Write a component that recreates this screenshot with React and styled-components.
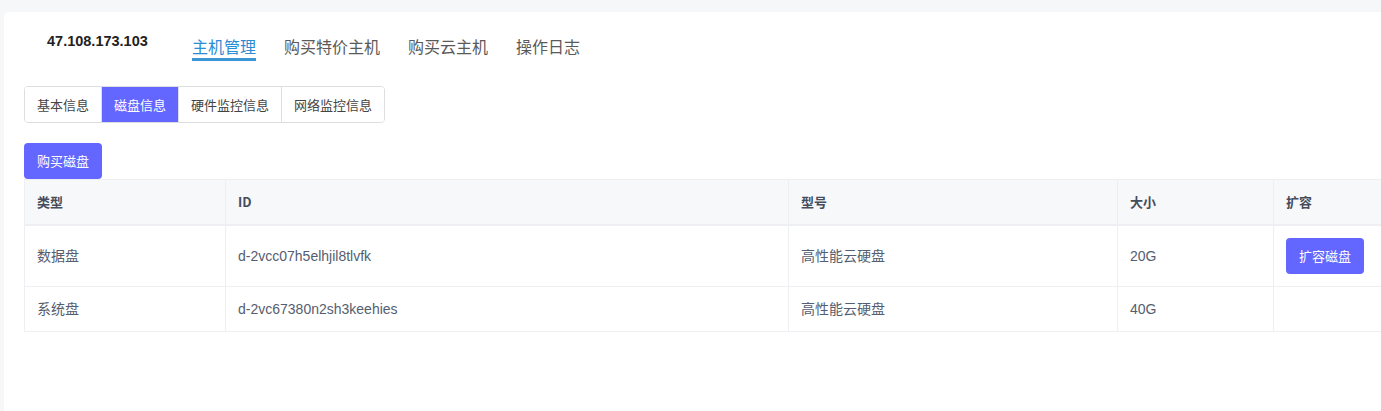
import React from "react";
import styled, { createGlobalStyle } from "styled-components";

const Global = createGlobalStyle`
  html, body { margin: 0; padding: 0; background: #f6f7f9; overflow: hidden; }
  body { font-family: "Liberation Sans", "Noto Sans CJK SC", sans-serif; }
  * { box-sizing: border-box; }
`;

const Page = styled.div`
  padding: 12px 0 0 4px;
  width: 1381px;
  height: 411px;
`;

const Card = styled.div`
  background: #fff;
  border-radius: 5px 0 0 0;
  width: 1420px;
  height: 400px;
  padding: 22px 0 0 20px;
`;

const Header = styled.div`
  display: flex;
  align-items: flex-start;
`;

const Ip = styled.div`
  font-family: "Liberation Sans", sans-serif;
  font-weight: bold;
  font-size: 14.5px;
  color: #222;
  padding: 0 0 0 23px;
  width: 168px;
  line-height: 14px;
`;

const Nav = styled.nav`
  display: flex;
  gap: 28px;
  padding-top: 2px;
`;

const NavItem = styled.div`
  font-family: "Noto Sans CJK SC", sans-serif;
  font-size: 16px;
  line-height: 20px;
  padding-bottom: 2px;
  color: ${(p) => (p.$active ? "#2c8cd4" : "#5a5a5a")};
  border-bottom: 3px solid ${(p) => (p.$active ? "#3c96d6" : "transparent")};
`;

const Tabs = styled.div`
  display: inline-flex;
  margin-top: 25px;
  border: 1px solid #dcdee2;
  border-radius: 4px;
  overflow: hidden;
`;

const Tab = styled.div`
  font-family: "Noto Sans CJK SC", sans-serif;
  font-size: 13px;
  line-height: 21px;
  padding: 7px 12px;
  color: ${(p) => (p.$active ? "#fff" : "#444")};
  background: ${(p) => (p.$active ? "#6366ff" : "#fff")};
  & + & { border-left: 1px solid #dcdee2; }
`;

const Button = styled.button`
  font-family: "Noto Sans CJK SC", sans-serif;
  font-size: 13px;
  line-height: 20px;
  height: 36px;
  padding: 0 13px;
  border: none;
  border-radius: 4px;
  background: #6366ff;
  color: #fff;
  cursor: pointer;
`;

const Toolbar = styled.div`
  margin-top: 20px;
  display: flex;
`;

const Table = styled.table`
  border-collapse: collapse;
  table-layout: fixed;
  width: 1396px;
  font-family: "Liberation Sans", "Noto Sans CJK SC", sans-serif;
  font-size: 14px;
  color: #555d70;
`;

const Th = styled.th`
  text-align: left;
  font-weight: bold;
  background: #f7f8fa;
  color: #454c5c;
  padding: 11px 12px;
  line-height: 20px;
  height: 45px;
  border: 1px solid #edeff3;
  border-bottom-width: 2px;
  font-family: "Noto Sans CJK SC", "Liberation Sans", sans-serif;
  font-size: 13px;
`;

const Td = styled.td`
  padding: 12px 12px;
  line-height: 20px;
  height: 44px;
  border: 1px solid #edeff3;
  border-top: none;
  vertical-align: middle;
`;

const columns = [
  { key: "type", title: "类型", width: 201 },
  { key: "id", title: "ID", width: 563 },
  { key: "model", title: "型号", width: 329 },
  { key: "size", title: "大小", width: 156 },
  { key: "expand", title: "扩容", width: 147 },
];

const rows = [
  { type: "数据盘", id: "d-2vcc07h5elhjil8tlvfk", model: "高性能云硬盘", size: "20G", expand: true },
  { type: "系统盘", id: "d-2vc67380n2sh3keehies", model: "高性能云硬盘", size: "40G", expand: false },
];

export default function App() {
  return (
    <>
      <Global />
      <Page>
        <Card>
          <Header>
            <Ip>47.108.173.103</Ip>
            <Nav>
              <NavItem $active>主机管理</NavItem>
              <NavItem>购买特价主机</NavItem>
              <NavItem>购买云主机</NavItem>
              <NavItem>操作日志</NavItem>
            </Nav>
          </Header>
          <Tabs>
            <Tab>基本信息</Tab>
            <Tab $active>磁盘信息</Tab>
            <Tab>硬件监控信息</Tab>
            <Tab>网络监控信息</Tab>
          </Tabs>
          <Toolbar>
            <Button>购买磁盘</Button>
          </Toolbar>
          <Table>
            <colgroup>
              {columns.map((c) => (
                <col key={c.key} style={{ width: c.width }} />
              ))}
            </colgroup>
            <thead>
              <tr>
                {columns.map((c) => (
                  <Th key={c.key}>{c.title}</Th>
                ))}
              </tr>
            </thead>
            <tbody>
              {rows.map((r) => (
                <tr key={r.id}>
                  <Td>{r.type}</Td>
                  <Td>{r.id}</Td>
                  <Td>{r.model}</Td>
                  <Td>{r.size}</Td>
                  <Td>{r.expand ? <Button>扩容磁盘</Button> : null}</Td>
                </tr>
              ))}
            </tbody>
          </Table>
        </Card>
      </Page>
    </>
  );
}
